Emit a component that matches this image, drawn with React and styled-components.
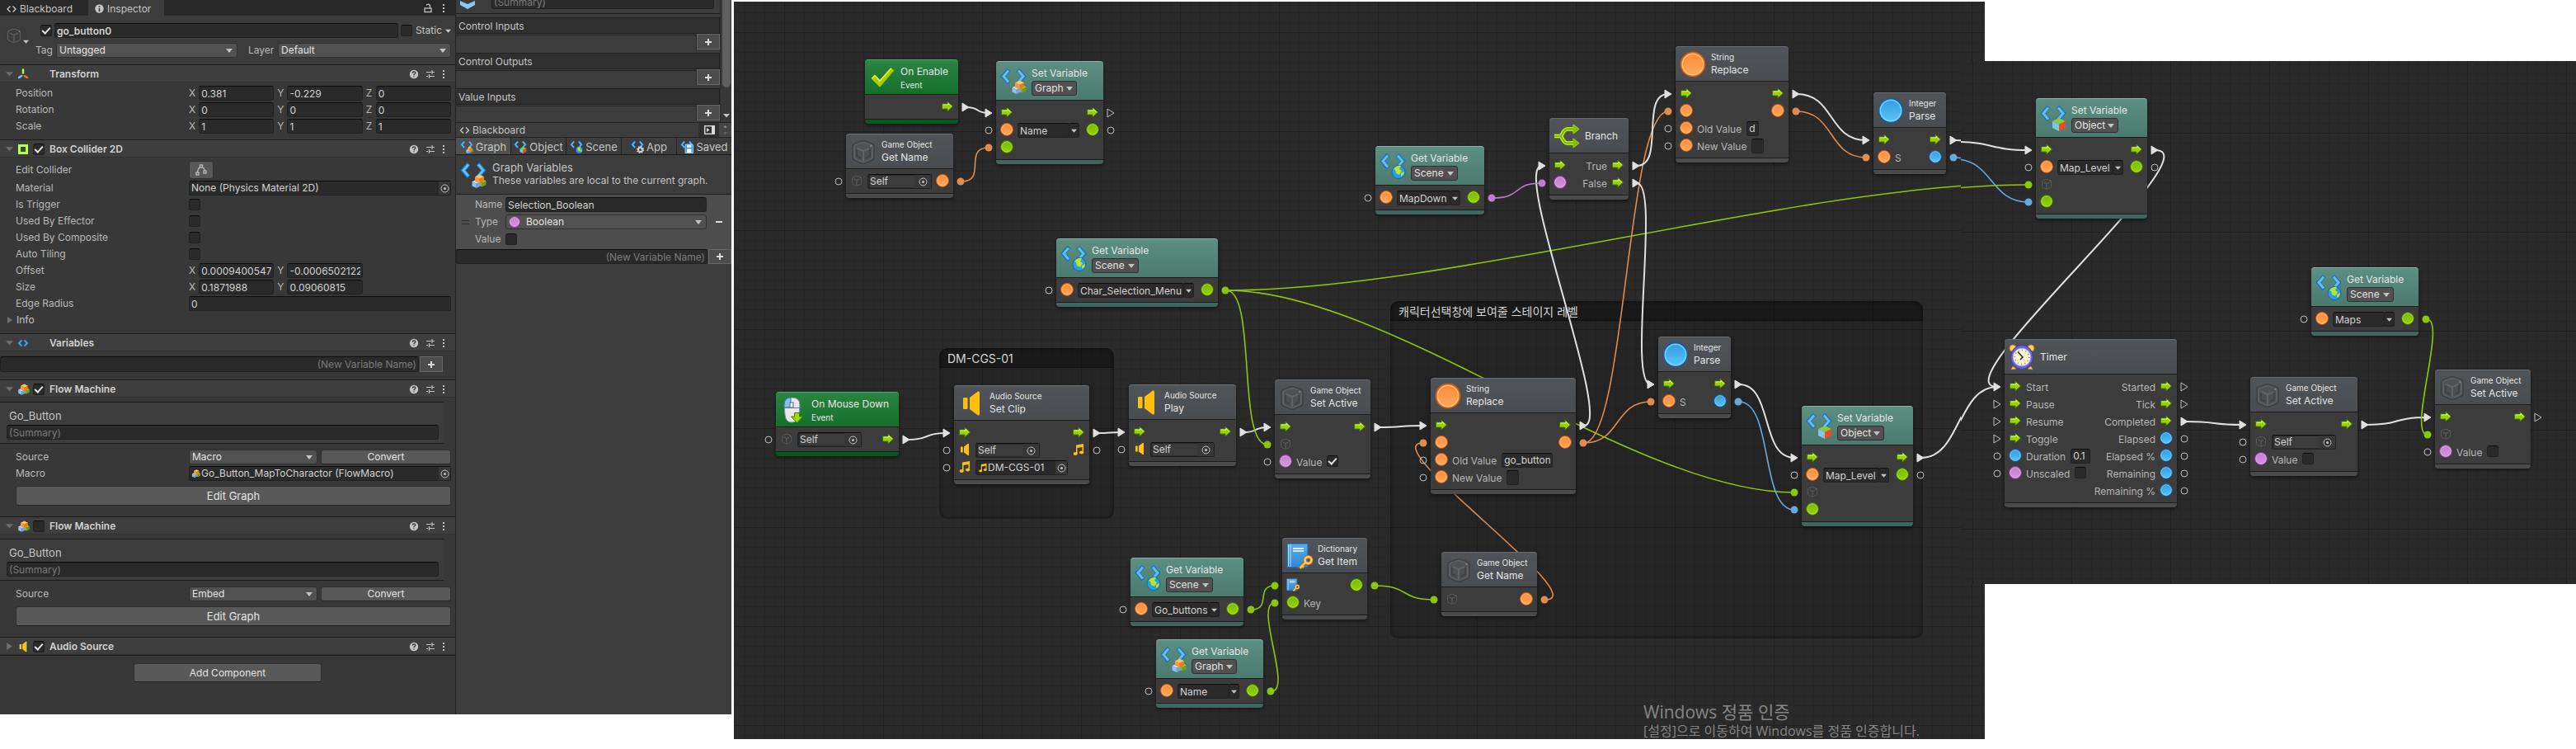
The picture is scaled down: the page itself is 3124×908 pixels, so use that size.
import React, { useId } from "react";
import styled, { createGlobalStyle, css } from "styled-components";

const GlobalStyle = createGlobalStyle`
  * { box-sizing: border-box; }
  body { margin: 0; background: #fff; color: #c4c4c4; font: 12px/16px Inter, "Noto Sans CJK KR", sans-serif; }
  button, input, select { font: inherit; color: inherit; margin: 0; }
  svg { display: block; flex: none; }
`;

const FLOW = "#e0e0e0";
const STR = "#e08c50";
const OBJ = "#8cc60c";
const BOOL = "#c07cce";
const NUM = "#64aade";

/* ---------- drawings ---------- */

const DefsHolder = styled.svg`
  position: absolute;
  width: 0;
  height: 0;
`;

const Gradients = () => (
  <DefsHolder aria-hidden="true">
    <defs>
      {[
        ["gOrange", "#ff8a34", "#ffa95e"],
        ["gGreen", "#78b800", "#9ad400"],
        ["gPink", "#c47fcf", "#d696df"],
        ["gBlue", "#2f9ade", "#5cc6fb"],
        ["gArrow", "#8fc400", "#a4dc00"],
        ["gBook", "#5aaee8", "#2f86d6"],
      ].map(([id, a, b]) => (
        <linearGradient key={id} id={id} x1="0" y1="0" x2="0" y2="1">
          <stop offset="0" stopColor={a} />
          <stop offset="1" stopColor={b} />
        </linearGradient>
      ))}
    </defs>
  </DefsHolder>
);

const Ball = ({ size, fill, rim, shine }) => (
  <svg width={size} height={size} viewBox="0 0 32 32">
    <circle cx="16" cy="16" r="14.5" fill={`url(#${fill})`} stroke={rim} strokeWidth={size > 20 ? 1.6 : 2.6} />
    <circle cx="16" cy="16" r="12.6" fill="none" stroke={shine} strokeWidth={size > 20 ? 1.2 : 1.8} opacity="0.75" />
  </svg>
);

const CodeMarks = () => (
  <g fill="none" strokeLinecap="butt" strokeLinejoin="miter">
    <path d="M10.5 2.5 L3.5 10.5 L10.5 18.5" stroke="#1c72b8" strokeWidth="5" />
    <path d="M21.5 2.5 L28.5 10.5 L21.5 18.5" stroke="#1c72b8" strokeWidth="5" />
    <path d="M10 3.5 L4 10.5 L10 17.5" stroke="#62bdf2" strokeWidth="3" />
    <path d="M22 3.5 L28 10.5 L22 17.5" stroke="#62bdf2" strokeWidth="3" />
  </g>
);

const CubeBit = ({ x, y, s, top, left, right }) => (
  <g transform={`translate(${x} ${y}) scale(${s})`}>
    <path d="M5 0 L10 2.5 L5 5 L0 2.5 Z" fill={top} />
    <path d="M0 2.5 L5 5 V10 L0 7.5 Z" fill={left} />
    <path d="M10 2.5 L5 5 V10 L10 7.5 Z" fill={right} />
  </g>
);

const Cubes = () => (
  <g>
    <CubeBit x={22} y={21} s={0.95} top="#b5d84a" left="#8ab52e" right="#6d9d20" />
    <CubeBit x={14.5} y={21.5} s={1.05} top="#c3e0fa" left="#8ec2f2" right="#6aa8e4" />
    <CubeBit x={18} y={15.5} s={1.1} top="#ffc266" left="#fb9a35" right="#e97e14" />
  </g>
);

const Globe = () => (
  <g>
    <circle cx="23" cy="23.5" r="8" fill="#2f9be4" stroke="#1767a8" strokeWidth="1" />
    <path d="M17 20 q4 -5 9 -4 l-2 4 3 2 -3 5 -4 -2 -1 -4 Z M26 25 l4 -2 -1 4 -3 2 Z" fill="#b4e82e" />
  </g>
);

const ObjCube = () => (
  <CubeBit x={15} y={16} s={1.6} top="#8fc83a" left="#7cc4f4" right="#ee4a1e" />
);

const GearBit = () => (
  <g>
    <circle cx="23" cy="23" r="5" fill="none" stroke="#d0d0d0" strokeWidth="4" />
    <circle cx="23" cy="23" r="7.8" fill="none" stroke="#d0d0d0" strokeWidth="3" strokeDasharray="3 3.12" />
  </g>
);

const DiskBit = () => (
  <g>
    <path d="M12 10 H29 L31 12 V31 H12 Z" fill="#2a9be6" stroke="#d9f0ff" strokeWidth="1.4" />
    <rect x="16" y="11" width="11" height="7" fill="#d9f0ff" />
    <rect x="16" y="21" width="11" height="9" fill="#fff" />
  </g>
);

const VarIcon = ({ size, badge: Badge }) => (
  <svg width={size} height={size} viewBox="0 0 32 32">
    <CodeMarks />
    {Badge && <Badge />}
  </svg>
);

const GhostCube = ({ size }) => (
  <svg width={size} height={size} viewBox="0 0 32 32" fill="none" strokeLinejoin="round">
    <path d="M3 9 Q3 7 6 6 L14 3 Q16 2.5 18 3 L26 6 Q29 7 29 9 V23 Q29 25 27 26 L18 30 Q16 30.5 14 30 L5 26 Q3 25 3 23 Z" stroke="#38393a" strokeWidth="1.4" opacity="0.7" />
    <path d="M5 10 Q5 8 8 7 L14 5 Q16 4.5 18 5 L24 7 Q27 8 27 10 V22 Q27 24 25 25 L18 28 Q16 28.6 14 28 L7 25 Q5 24 5 22 Z" stroke="#606264" strokeWidth="1.8" opacity="0.8" />
    <path d="M9 12 L16 15 L23 12 M16 15 V27" stroke="#6a6c6e" strokeWidth="2" opacity="0.7" />
    <path d="M8 13 V21 L13 24 M24 13 V21 L19 24" stroke="#38393a" strokeWidth="1.6" opacity="0.7" />
    <path d="M24.5 8.5 L26 9.5" stroke="#8a8c8e" strokeWidth="2" />
  </svg>
);

const FlowArrow = ({ size }) => (
  <svg width={size} height={size} viewBox="0 0 16 16">
    <path d="M1.5 5 H8 V2 L14.5 8 L8 14 V11 H1.5 Z" fill="url(#gArrow)" stroke="#3f7a00" strokeWidth="1" />
    <path d="M2.5 6 H9 V4.4 L12.8 8" fill="none" stroke="#eaf7a0" strokeWidth="1" />
  </svg>
);

const Speaker = ({ size }) => (
  <svg width={size} height={size} viewBox="0 0 32 32" fill="#fdc010">
    <rect x="6" y="9" width="5.5" height="14" rx="1" />
    <path d="M14 9 L24 1.5 Q26 1 26 3 V29 Q26 31 24 30.5 L14 23 Z" />
  </svg>
);

const Note = ({ size }) => (
  <svg width={size} height={size} viewBox="0 0 16 16" fill="#fdc010">
    <path d="M5 2.5 L14 1 V11 H12.5 V5 L6.5 6 V13 H5 Z" />
    <ellipse cx="4.2" cy="13" rx="2.6" ry="2" />
    <ellipse cx="11.6" cy="11.4" rx="2.6" ry="2" />
  </svg>
);

const Check = ({ size }) => (
  <svg width={size} height={size} viewBox="0 0 32 32">
    <path d="M2 17 L7 12 L13 18.5 L26.5 3.5 L30.5 7.5 L13 28 Z" fill="#a5cf00" stroke="#587f00" strokeWidth="1" />
    <path d="M3.5 17 L7 13.5 L13 20 L26.5 5" fill="none" stroke="#e2f56a" strokeWidth="1.2" />
  </svg>
);

const Mouse = ({ size }) => (
  <svg width={size} height={size} viewBox="0 0 32 32">
    <path d="M5 10 Q5 1 14 1 Q24 1 24 10 L23 22 Q22 31 14 31 Q7 31 6 22 Z" fill="#e6e8ea" stroke="#8b9094" strokeWidth="1" />
    <path d="M5 13 V10 Q5 1 13 1 V13 Z" fill="#8fbfe8" stroke="#2f6fae" strokeWidth="1" />
    <path d="M5 13.5 H24" stroke="#5d7f9e" strokeWidth="1" />
    <rect x="12" y="7" width="4" height="6" fill="#fff" stroke="#3f6a94" strokeWidth="1" />
    <path d="M17.5 19.5 H23.5 V24 H27.5 L20.5 31.5 L13.5 24 H17.5 Z" fill="#a2d800" stroke="#3f7a00" strokeWidth="1" />
  </svg>
);

const BookKey = ({ size }) => (
  <svg width={size} height={size} viewBox="0 0 32 32">
    <rect x="1" y="1" width="25" height="29" fill="url(#gBook)" stroke="#1a5fa0" strokeWidth="1" />
    <path d="M2.5 2 V29 M5 2 V29" stroke="#b5dcf7" strokeWidth="1" />
    <path d="M8 7 H21 M8 10 H21" stroke="#fff" strokeWidth="1.5" />
    <path d="M16 31 L24 23" stroke="#a86a10" strokeWidth="5" />
    <circle cx="26.5" cy="21" r="4" fill="none" stroke="#a86a10" strokeWidth="4.4" />
    <path d="M16.5 30.5 L24 23 M18 27 l3 3" stroke="#fdc860" strokeWidth="2.4" />
    <circle cx="26.5" cy="21" r="4" fill="none" stroke="#fdc860" strokeWidth="2.8" />
  </svg>
);

const BranchIcon = ({ size }) => (
  <svg width={size} height={size} viewBox="0 0 32 32" fill="none">
    {[["#3f7a00", 6.4], ["#d3f060", 4.4], ["#86bd00", 2.4]].map(([c, w]) => (
      <g key={c}>
        <path d="M1 16 H8 C11 16 11 7.5 17 7.5 H26 M8 16 C11 16 11 24.5 17 24.5 H26" stroke={c} strokeWidth={w} />
        <path d="M24 2 L31 7.5 L24 13 Z M24 19 L31 24.5 L24 30 Z" fill={c} stroke={c} strokeWidth={(w - 2) / 3} />
      </g>
    ))}
  </svg>
);

const Clock = ({ size }) => (
  <svg width={size} height={size} viewBox="0 0 32 32">
    <circle cx="5" cy="5" r="4" fill="#ffcf5c" stroke="#c08820" />
    <circle cx="27" cy="5" r="4" fill="#ffcf5c" stroke="#c08820" />
    <path d="M5 27 L3 31 L9 30 Z M27 27 L29 31 L23 30 Z" fill="#ffcf5c" stroke="#c08820" strokeWidth="0.6" />
    <ellipse cx="16" cy="16" rx="13.5" ry="14.5" fill="#6a62d8" stroke="#40389c" strokeWidth="1" />
    <circle cx="16" cy="16" r="10.8" fill="#fdf6d2" stroke="#a8a2f0" strokeWidth="1" />
    <circle cx="16" cy="16" r="8.6" fill="none" stroke="#555" strokeWidth="1.4" strokeDasharray="0.8 3.7" />
    <path d="M11 9.5 L17 16 L14 19" fill="none" stroke="#222" strokeWidth="1.5" />
  </svg>
);

const Target = () => (
  <svg width="11" height="11" viewBox="0 0 11 11">
    <circle cx="5.5" cy="5.5" r="4.5" fill="none" stroke="#c4c4c4" />
    <circle cx="5.5" cy="5.5" r="1.5" fill="#c4c4c4" />
  </svg>
);

const Caret = ({ dir = "down", color = "#c4c4c4", w = 8 }) => (
  <svg width={w} height={w} viewBox="0 0 8 8">
    <path d={dir === "down" ? "M0 2 H8 L4 6.5 Z" : dir === "up" ? "M0 6 H8 L4 1.5 Z" : "M1 0 L7 4 L1 8 Z"} fill={color} />
  </svg>
);

const CodeGlyph = ({ w = 12, color = "#c4c4c4", stroke = 1.4 }) => (
  <svg width={w} height="10" viewBox="0 0 12 10" fill="none" stroke={color} strokeWidth={stroke}>
    <path d="M4.5 1.5 L1 5 L4.5 8.5 M7.5 1.5 L11 5 L7.5 8.5" />
  </svg>
);

const Kebab = () => (
  <svg width="4" height="12" viewBox="0 0 4 12" fill="#c4c4c4">
    <rect x="1" y="1" width="2" height="2" /><rect x="1" y="5" width="2" height="2" /><rect x="1" y="9" width="2" height="2" />
  </svg>
);

const HelpGlyph = () => (
  <svg width="12" height="12" viewBox="0 0 12 12">
    <circle cx="6" cy="6" r="5.2" fill="#c4c4c4" />
    <path d="M4.2 4.8 Q4.2 3 6 3 Q7.8 3 7.8 4.6 Q7.8 5.6 6 6.4 V7.2 M6 8.2 V9.4" fill="none" stroke="#3c3c3c" strokeWidth="1.3" />
  </svg>
);

const PresetGlyph = () => (
  <svg width="12" height="12" viewBox="0 0 12 12" stroke="#c4c4c4" strokeWidth="1.2">
    <path d="M1 3.5 H7 M8 1 V6 M8 3.5 H11 M1 8.5 H3 M4.5 6 V11 M4.5 8.5 H11" />
  </svg>
);

const TransformGlyph = () => (
  <svg width="14" height="14" viewBox="0 0 14 14" strokeWidth="2.4" strokeLinecap="round">
    <path d="M7 1.5 V5.5" stroke="#b4ff50" />
    <path d="M5.2 9 L2 11" stroke="#78c8ff" />
    <path d="M8.8 9 L12 11" stroke="#ff6a3c" />
  </svg>
);

const ColliderGlyph = () => (
  <svg width="14" height="14" viewBox="0 0 14 14">
    <rect x="2.5" y="2.5" width="9" height="9" fill="#3a4a22" stroke="#b4ff50" strokeWidth="3" />
  </svg>
);

const MachineGlyph = ({ size = 16 }) => (
  <svg width={size} height={size} viewBox="13 14 20 19"><Cubes /></svg>
);

const ICONS = {
  arrow: (s) => <FlowArrow size={s} />,
  string: (s) => <Ball size={s} fill="gOrange" rim="#d95f0c" shine="#ffd0a0" />,
  object: (s) => <Ball size={s} fill="gGreen" rim="#3f7400" shine="#c8f060" />,
  bool: (s) => <Ball size={s} fill="gPink" rim="#8a3f98" shine="#eec0f4" />,
  int: (s) => <Ball size={s} fill="gBlue" rim="#125f9c" shine="#a0dcfc" />,
  cube: (s) => <GhostCube size={s} />,
  speaker: (s) => <Speaker size={s} />,
  note: (s) => <Note size={s} />,
  check: (s) => <Check size={s} />,
  mouse: (s) => <Mouse size={s} />,
  book: (s) => <BookKey size={s} />,
  branch: (s) => <BranchIcon size={s} />,
  clock: (s) => <Clock size={s} />,
  Graph: (s) => <VarIcon size={s} badge={Cubes} />,
  Scene: (s) => <VarIcon size={s} badge={Globe} />,
  Object: (s) => <VarIcon size={s} badge={ObjCube} />,
  App: (s) => <VarIcon size={s} badge={GearBit} />,
  Saved: (s) => <VarIcon size={s} badge={DiskBit} />,
};

/* ---------- shared controls ---------- */

const Page = styled.div`
  display: flex;
  align-items: flex-start;
`;

const inset = css`
  background: #2a2a2a;
  border: 1px solid #212121;
  border-top-color: #0d0d0d;
  border-radius: 3px;
`;

const TextInput = styled.input`
  ${inset}
  flex: ${(p) => (p.$w ? `0 0 ${p.$w}px` : "1 1 0")};
  width: ${(p) => (p.$w ? `${p.$w}px` : "100%")};
  min-width: 0;
  height: ${(p) => p.$h || 18}px;
  padding: 0 2px;
  color: #d2d2d2;
  outline: none;
  font-weight: ${(p) => (p.$bold ? 600 : 400)};
  text-align: ${(p) => (p.$right ? "right" : "left")};
  &::placeholder { color: #7b7b7b; opacity: 1; }
`;

const Tick = styled.input.attrs({ type: "checkbox" })`
  ${inset}
  appearance: none;
  flex: none;
  width: 14px;
  height: 14px;
  display: grid;
  place-items: center;
  &:checked::after {
    content: "";
    width: 4px;
    height: 8px;
    margin-top: -2px;
    border: solid #e4e4e4;
    border-width: 0 2px 2px 0;
    transform: rotate(42deg);
  }
`;

const PushButton = styled.button`
  display: flex;
  align-items: center;
  justify-content: center;
  flex: ${(p) => (p.$w ? `0 0 ${p.$w}px` : "1 1 0")};
  height: ${(p) => p.$h || 18}px;
  padding: 0;
  background: #585858;
  border: 1px solid #303030;
  border-bottom-color: #242424;
  border-radius: 3px;
  color: #e4e4e4;
  font-size: ${(p) => (p.$large ? 13 : 12)}px;
`;

const PlusButton = styled.button`
  flex: 0 0 28px;
  height: ${(p) => p.$h || 19}px;
  display: grid;
  place-items: center;
  padding: 0;
  background: #4c4c4c;
  border: 1px solid #666;
  color: #d8d8d8;
`;

const Plus = () => (
  <svg width="8" height="8" viewBox="0 0 8 8" stroke="#dcdcdc" strokeWidth="2"><path d="M4 0 V8 M0 4 H8" /></svg>
);

const SelectBox = styled.div`
  position: relative;
  display: flex;
  flex: ${(p) => (p.$w ? `0 0 ${p.$w}px` : "1 1 0")};
  width: ${(p) => (p.$w ? `${p.$w}px` : "auto")};
  min-width: 0;
  select {
    appearance: none;
    flex: 1;
    min-width: 0;
    height: 18px;
    padding: 0 ${(p) => (p.$dot ? "0 0 24px" : "3px")};
    background: #515151;
    border: 1px solid #303030;
    border-radius: 3px;
    color: #e4e4e4;
    outline: none;
  }
  &::after {
    content: "";
    position: absolute;
    right: ${(p) => (p.$tight ? 5 : 6)}px;
    top: 7px;
    border: solid transparent;
    border-width: 5px 4px 0;
    border-top-color: #c4c4c4;
    pointer-events: none;
  }
`;

const DotMark = styled.span`
  position: absolute;
  left: 4px;
  top: 2px;
`;

const Pick = ({ value, label, id, w, tight, dot }) => (
  <SelectBox $w={w} $tight={tight} $dot={dot}>
    <select id={id} aria-label={label} defaultValue={value}><option>{value}</option></select>
    {dot && <DotMark>{ICONS.bool(14)}</DotMark>}
  </SelectBox>
);

const ObjectBox = styled.div`
  ${inset}
  display: flex;
  align-items: center;
  flex: ${(p) => (p.$w ? `0 0 ${p.$w}px` : "1 1 0")};
  width: ${(p) => (p.$w ? `${p.$w}px` : "auto")};
  min-width: 0;
  height: 18px;
  padding-left: 2px;
  input {
    flex: 1;
    min-width: 0;
    height: 14px;
    padding: 0;
    border: 0;
    background: ${(p) => (p.$soft ? "#3c3c3c" : "transparent")};
    color: #d2d2d2;
    outline: none;
  }
  button {
    flex: 0 0 ${(p) => (p.$soft ? 20 : 14)}px;
    height: 16px;
    display: grid;
    place-items: center;
    padding: 0;
    border: 0;
    background: #373737;
  }
`;

const ObjectField = ({ value, icon, w, soft, id, label }) => (
  <ObjectBox $w={w} $soft={soft}>
    {icon}
    <input id={id} aria-label={label} defaultValue={value} />
    <button aria-label="Pick object"><Target /></button>
  </ObjectBox>
);

/* ---------- inspector ---------- */

const Inspector = styled.section`
  flex: 0 0 553px;
  min-width: 0;
  min-height: 866px;
  background: #383838;
  border-right: 1px solid #242424;
`;

const TabStrip = styled.div`
  display: flex;
  align-items: center;
  height: 19px;
  background: #282828;
`;

const Tab = styled.button`
  display: flex;
  align-items: center;
  gap: 4px;
  flex: 0 0 ${(p) => p.$w}px;
  height: 19px;
  padding: 2px 8px 0;
  border: 0;
  background: ${(p) => (p.$on ? "#3c3c3c" : "transparent")};
  color: #c4c4c4;
`;

const StripTools = styled.div`
  display: flex;
  align-items: center;
  gap: 12px;
  margin-left: auto;
  padding-right: 12px;
`;

const Identity = styled.div`
  display: grid;
  grid-template-columns: 37px 1fr;
  height: 78px;
  margin-bottom: -19px;
  padding: 9px 5px 0 6px;
  background: #3c3c3c;
`;

const Avatar = styled.div`
  display: flex;
  align-items: flex-end;
  height: 26px;
`;

const IdentityRows = styled.div`
  display: grid;
  align-content: start;
  gap: 6px;
`;

const Line = styled.div`
  display: flex;
  align-items: center;
  gap: ${(p) => p.$gap ?? 4}px;
`;

const Caption = styled.label`
  flex: ${(p) => (p.$w ? `0 0 ${p.$w}px` : "none")};
  min-width: 0;
  color: #b8b8b8;
`;

const SectionBar = styled.header`
  display: flex;
  align-items: center;
  position: relative;
  height: 22px;
  padding: 1px 12px 0 7px;
  background: #3e3e3e;
  border-top: 1px solid #1a1a1a;
  border-bottom: 1px solid #303030;
`;

const Slot = styled.span`
  display: flex;
  align-items: center;
  flex: 0 0 ${(p) => p.$w}px;
`;

const SectionTitle = styled.h2`
  flex: 1;
  margin: 0;
  font-size: 12px;
  font-weight: 600;
  color: #d2d2d2;
`;

const BarTools = styled.span`
  display: flex;
  align-items: center;
  gap: 8px;
`;

const SectionBody = styled.div`
  display: grid;
  gap: 2px;
  padding: 4px 5px 7px 19px;
`;

const PropRow = styled.div`
  display: grid;
  grid-template-columns: 210px 1fr;
  align-items: center;
  min-height: ${(p) => p.$h || 18}px;
`;

const Axes = styled.div`
  display: grid;
  grid-template-columns: repeat(3, 1fr);
  gap: 4px;
  label { display: flex; gap: 4px; align-items: center; min-width: 0; }
  span { flex: 0 0 8px; color: #b8b8b8; }
`;

const EditToggle = styled.button`
  width: 30px;
  height: 22px;
  display: grid;
  place-items: center;
  padding: 0;
  background: #585858;
  border: 1px solid #303030;
  border-radius: 3px;
`;

const Foldout = styled.button`
  display: flex;
  align-items: center;
  gap: 4px;
  height: 18px;
  margin-left: -11px;
  padding: 0;
  border: 0;
  background: none;
`;

const NewVariable = styled.div`
  display: flex;
  gap: 1px;
  padding: ${(p) => (p.$pad ? "6px 15px 9px 0" : "0")};
`;

const Summary = styled.div`
  margin: 5px 14px 0 0;
  padding: 8px 6px 4px 8px;
  border: solid #1a1a1a;
  border-width: 1px 0;
  background: #3c3c3c;
  display: grid;
  gap: 3px;
  h3 { margin: 0; padding-left: 3px; font-size: 13px; line-height: 16px; font-weight: 400; }
`;

const MachineBody = styled.div`
  display: grid;
  gap: 2px;
  padding: 7px 5px 13px 19px;
`;

const EditGraph = styled(PushButton)`
  margin-top: 4px;
  width: 100%;
`;

const AddRow = styled.div`
  display: flex;
  justify-content: center;
  padding-top: 9px;
  border-top: 1px solid #1a1a1a;
`;

const Section = ({ icon, title, toggle, on, closed, children }) => (
  <section>
    <SectionBar>
      <Slot $w={14}><Caret dir={closed ? "right" : "down"} color="#6e6e6e" w={9} /></Slot>
      <Slot $w={19}>{icon}</Slot>
      <Slot $w={20}>{toggle && <Tick defaultChecked={on} aria-label={`Enable ${title}`} />}</Slot>
      <SectionTitle>{title}</SectionTitle>
      <BarTools><HelpGlyph /><PresetGlyph /><Kebab /></BarTools>
    </SectionBar>
    {children}
  </section>
);

const Vector = ({ label, values }) => (
  <PropRow>
    <Caption as="span">{label}</Caption>
    <Axes>
      {values.map((v, i) => (
        <label key={i}><span>{"XYZ"[i]}</span><TextInput defaultValue={v} /></label>
      ))}
    </Axes>
  </PropRow>
);

const Prop = ({ label, render, h }) => {
  const id = useId();
  return (
    <PropRow $h={h}>
      <Caption htmlFor={id}>{label}</Caption>
      <Line>{render(id)}</Line>
    </PropRow>
  );
};

const FlowMachine = ({ on, source, macro }) => (
  <Section icon={<MachineGlyph />} title="Flow Machine" toggle on={on}>
    <Summary>
      <h3>Go_Button</h3>
      <TextInput placeholder="(Summary)" aria-label="Summary" />
    </Summary>
    <MachineBody>
      <Prop label="Source" render={(id) => (<><Pick id={id} value={source} /><PushButton>Convert</PushButton></>)} />
      {macro && (
        <Prop label="Macro" render={(id) => <ObjectField id={id} value={macro} icon={<MachineGlyph size={12} />} />} />
      )}
      <EditGraph $h={24} $large>Edit Graph</EditGraph>
    </MachineBody>
  </Section>
);

const InspectorPanel = () => (
  <Inspector>
    <TabStrip>
      <Tab $w={107}><CodeGlyph />Blackboard</Tab>
      <Tab $w={92} $on>
        <svg width="11" height="11" viewBox="0 0 11 11">
          <circle cx="5.5" cy="5.5" r="5.2" fill="#c4c4c4" />
          <path d="M5.5 2 V3.5 M5.5 4.8 V9" stroke="#3c3c3c" strokeWidth="1.6" />
        </svg>
        Inspector
      </Tab>
      <StripTools>
        <svg width="10" height="12" viewBox="0 0 10 12" fill="none" stroke="#c4c4c4" strokeWidth="1.3">
          <rect x="1" y="6" width="8" height="4.5" /><path d="M7.5 6 V3.5 Q7.5 1.2 5.2 1.2 Q3.6 1.2 3.2 2.6" />
        </svg>
        <Kebab />
      </StripTools>
    </TabStrip>
    <Identity>
      <Avatar><GhostCube size={22} /><Caret w={7} /></Avatar>
      <IdentityRows>
        <Line $gap={3}>
          <Slot $w={3} />
          <Tick defaultChecked aria-label="Active" />
          <TextInput $bold defaultValue="go_button0" aria-label="Name" />
          <Line as="label" $gap={4}><Tick /><span>Static</span><Caret w={7} /></Line>
        </Line>
        <Line $gap={3}>
          <Caption $w={22} htmlFor="tag">Tag</Caption>
          <Pick id="tag" value="Untagged" w={220} />
          <Slot $w={7} />
          <Caption $w={33} htmlFor="layer">Layer</Caption>
          <Pick id="layer" value="Default" />
        </Line>
      </IdentityRows>
    </Identity>

    <Section icon={<TransformGlyph />} title="Transform">
      <SectionBody>
        <Vector label="Position" values={["0.381", "-0.229", "0"]} />
        <Vector label="Rotation" values={["0", "0", "0"]} />
        <Vector label="Scale" values={["1", "1", "1"]} />
      </SectionBody>
    </Section>

    <Section icon={<ColliderGlyph />} title="Box Collider 2D" toggle on>
      <SectionBody>
        <Prop label="Edit Collider" h={22} render={(id) => (
          <EditToggle id={id} aria-label="Edit Collider">
            <svg width="14" height="14" viewBox="0 0 14 14" fill="none" stroke="#c4c4c4" strokeWidth="1.2">
              <path d="M2.5 10 Q3 5 6 3.5 M8 3.5 Q11 5 11.5 8" />
              <rect x="1" y="10" width="3" height="3" /><rect x="5.5" y="1" width="3" height="3" /><rect x="10" y="8" width="3" height="3" />
            </svg>
          </EditToggle>
        )} />
        <Prop label="Material" render={(id) => <ObjectField id={id} value="None (Physics Material 2D)" />} />
        {["Is Trigger", "Used By Effector", "Used By Composite", "Auto Tiling"].map((l) => (
          <Prop key={l} label={l} render={(id) => <Tick id={id} />} />
        ))}
        <Vector label="Offset" values={["0.0009400547", "-0.0006502122"]} />
        <Vector label="Size" values={["0.1871988", "0.09060815"]} />
        <Prop label="Edge Radius" render={(id) => <TextInput id={id} defaultValue="0" />} />
        <Foldout><Caret dir="right" color="#6e6e6e" />Info</Foldout>
      </SectionBody>
    </Section>

    <Section icon={<CodeGlyph w={14} color="#3ea0e6" stroke={2} />} title="Variables">
      <NewVariable $pad>
        <TextInput $h={19} $right placeholder="(New Variable Name)" aria-label="New variable name" />
        <PlusButton aria-label="Add variable"><Plus /></PlusButton>
      </NewVariable>
    </Section>

    <FlowMachine on source="Macro" macro="Go_Button_MapToCharactor (FlowMacro)" />
    <FlowMachine source="Embed" />

    <Section icon={<Speaker size={14} />} title="Audio Source" toggle on closed />
    <AddRow><PushButton $w={228} $h={23}>Add Component</PushButton></AddRow>
  </Inspector>
);

/* ---------- graph panel ---------- */

const GraphPanel = styled.section`
  flex: 0 0 334px;
  min-width: 0;
  min-height: 866px;
  margin-right: 3px;
  background: #3c3c3c;
`;

const PortsArea = styled.div`
  display: grid;
  grid-template-columns: 320px 1fr;
  height: 148px;
  overflow: hidden;
`;

const GraphHead = styled.div`
  display: flex;
  align-items: flex-end;
  gap: 20px;
  height: 17px;
  padding: 0 7px 5px 5px;
  border-bottom: 1px solid #1a1a1a;
  overflow: hidden;
`;

const PortList = styled.div`
  display: flex;
  flex-wrap: wrap;
  justify-content: flex-end;
  height: 39px;
  margin-top: 4px;
  h3 {
    flex: 0 0 100%;
    height: 20px;
    margin: 0;
    padding: 0 3px;
    font-size: 12px;
    font-weight: 400;
    line-height: 20px;
    background: #303030;
    border: solid #222;
    border-width: 1px 1px 1px 0;
  }
  div { flex: 1; height: 18px; border: solid #252525; border-width: 1px 1px 0 0; margin-top: 1px; }
`;

const ScrollTrack = styled.div`
  display: flex;
  flex-direction: column;
  align-items: center;
  justify-content: space-between;
  padding: 0 1px 4px;
  border-left: 1px solid #2c2c2c;
  background: #383838;
`;

const ScrollThumb = styled.div`
  width: 10px;
  height: 106px;
  border-radius: 0 0 5px 5px;
  background: #5f5f5f;
`;

const BoardBar = styled.div`
  display: flex;
  align-items: center;
  gap: 3px;
  height: 19px;
  padding-left: 4px;
  border: solid #222;
  border-width: 1px 0;
`;

const BarEnd = styled.div`
  display: flex;
  align-items: center;
  gap: 5px;
  margin-left: auto;
  height: 17px;
  padding-left: 7px;
  background: #303030;
`;

const Steppers = styled.div`
  display: grid;
  width: 15px;
  height: 17px;
  place-items: center;
  background: #454545;
`;

const ScopeTabs = styled.div`
  display: grid;
  grid-template-columns: repeat(5, 1fr);
  gap: 1px;
  height: 21px;
  background: #222;
  border-bottom: 1px solid #1a1a1a;
`;

const ScopeTab = styled.button`
  display: flex;
  align-items: center;
  justify-content: center;
  gap: 3px;
  min-width: 0;
  padding: 2px 0 0;
  border: 0;
  font-size: 13px;
  background: ${(p) => (p.$on ? "#505050" : "#3c3c3c")};
`;

const ScopeInfo = styled.div`
  display: flex;
  align-items: center;
  gap: 7px;
  height: 48px;
  padding-left: 5px;
  border-bottom: 1px solid #222;
  h3 { margin: 0; font-size: 13px; line-height: 15px; font-weight: 400; }
  p { margin: 0; line-height: 16px; white-space: nowrap; }
`;

const VariableItem = styled.div`
  display: grid;
  grid-template-columns: 10px 44px 244px 1fr;
  grid-auto-rows: 18px;
  gap: 3px 0;
  align-items: center;
  height: 66px;
  padding: 3px 0 0 6px;
  background: #4d4d4d;
  label { padding-left: 7px; color: #b8b8b8; }
  > svg { justify-self: center; }
`;

const SidePanel = () => (
  <GraphPanel>
    <PortsArea>
      <div>
        <GraphHead>
          <svg width="18" height="14" viewBox="0 0 18 14"><path d="M0 4 L9 8 L18 4 V9 L9 14 L0 9 Z" fill="#8ec6f4" /></svg>
          <TextInput placeholder="(Summary)" aria-label="Graph summary" />
        </GraphHead>
        {["Control Inputs", "Control Outputs", "Value Inputs"].map((t) => (
          <PortList key={t}>
            <h3>{t}</h3>
            <div />
            <PlusButton aria-label={`Add to ${t}`}><Plus /></PlusButton>
          </PortList>
        ))}
      </div>
      <ScrollTrack><ScrollThumb /><Caret /></ScrollTrack>
    </PortsArea>
    <BoardBar>
      <CodeGlyph w={13} />Blackboard
      <BarEnd>
        <svg width="13" height="11" viewBox="0 0 13 11">
          <rect x="0.7" y="0.7" width="11.6" height="9.6" fill="none" stroke="#d8d8d8" strokeWidth="1.4" />
          <path d="M9 1 H12 V10 H9 Z M3 3 L6.5 5.5 L3 8 Z" fill="#d8d8d8" />
        </svg>
        <Steppers><Caret dir="up" w={5} color="#888" /><Caret w={5} color="#666" /></Steppers>
      </BarEnd>
    </BoardBar>
    <ScopeTabs>
      {["Graph", "Object", "Scene", "App", "Saved"].map((t, i) => (
        <ScopeTab key={t} $on={i === 0}>{ICONS[t](16)}{t}</ScopeTab>
      ))}
    </ScopeTabs>
    <ScopeInfo>
      {ICONS.Graph(32)}
      <div>
        <h3>Graph Variables</h3>
        <p>These variables are local to the current graph.</p>
      </div>
    </ScopeInfo>
    <VariableItem>
      <span /><label htmlFor="v-name">Name</label><TextInput id="v-name" defaultValue="Selection_Boolean" /><span />
      <svg width="9" height="5" viewBox="0 0 9 5" stroke="#2c2c2c"><path d="M0 0.5 H9 M0 4.5 H9" /></svg>
      <label htmlFor="v-type">Type</label><Pick id="v-type" value="Boolean" dot />
      <svg width="8" height="2" viewBox="0 0 8 2"><path d="M0 1 H8" stroke="#dcdcdc" strokeWidth="2" /></svg>
      <span /><label htmlFor="v-value">Value</label><Tick id="v-value" /><span />
    </VariableItem>
    <NewVariable>
      <TextInput $right placeholder="(New Variable Name)" aria-label="New graph variable" />
      <PlusButton $h={18} aria-label="Add graph variable"><Plus /></PlusButton>
    </NewVariable>
  </GraphPanel>
);

/* ---------- node canvas ---------- */

const Board = styled.main`
  flex: 1;
  display: flex;
  align-items: flex-start;
  min-width: 0;
`;

const Sheet = styled.section`
  position: relative;
  flex: ${(p) => p.$grow} 0 0;
  height: ${(p) => p.$h}px;
  margin: ${(p) => p.$margin};
  overflow: hidden;
  background-color: #2a2a2a;
  background-image: linear-gradient(to right, #202020 1px, transparent 1px),
    linear-gradient(to bottom, #202020 1px, transparent 1px),
    linear-gradient(to right, #262626 1px, transparent 1px),
    linear-gradient(to bottom, #262626 1px, transparent 1px);
  background-size: 120px 120px, 120px 120px, 12px 12px, 12px 12px;
  background-position: ${(p) => `${p.$gx}px 0, 0 ${p.$gy}px, ${p.$gx % 12}px 0, 0 ${p.$gy % 12}px`};
`;

const WireLayer = styled.svg`
  position: absolute;
  inset: 0;
  width: 100%;
  height: 100%;
  fill: none;
`;

const GroupFrame = styled.div`
  position: absolute;
  left: ${(p) => p.$x}px;
  top: ${(p) => p.$y}px;
  width: ${(p) => p.$w}px;
  height: ${(p) => p.$h}px;
  border-radius: 10px;
  background: rgba(0, 0, 0, 0.12);
  box-shadow: inset 0 0 5px rgba(0, 0, 0, 0.5);
  overflow: hidden;
  h2 {
    margin: 0;
    padding-left: 10px;
    height: 24px;
    line-height: 26px;
    font-size: 14px;
    font-weight: 400;
    color: #d4d4d4;
    background: rgba(0, 0, 0, 0.3);
    border-bottom: 1px solid rgba(0, 0, 0, 0.35);
  }
`;

const TONES = {
  gray: ["#505357", "#494c50", "#6a6d70", "#4a4b4d"],
  teal: ["#5b8f81", "#4b7a6e", "#86b3a6", "#3e655e"],
  green: ["#2b8341", "#146f2d", "#5aa56c", "#04591f"],
};

const NodeCard = styled.article`
  position: absolute;
  left: ${(p) => p.$x}px;
  top: ${(p) => p.$y}px;
  width: ${(p) => p.$w}px;
  border-radius: 4px;
  background: ${(p) => TONES[p.$tone][3]};
  box-shadow: 0 2px 4px rgba(0, 0, 0, 0.5);
  padding-bottom: 5px;
`;

const NodeHead = styled.header`
  display: flex;
  align-items: center;
  gap: 6px;
  height: ${(p) => (p.$tall ? 47 : 42)}px;
  padding: 0 5px;
  border-top: 1px solid ${(p) => TONES[p.$tone][2]};
  border-radius: 4px 4px 0 0;
  background: linear-gradient(${(p) => TONES[p.$tone][0]}, ${(p) => TONES[p.$tone][1]});
`;

const NodeText = styled.div`
  display: grid;
  justify-items: start;
  white-space: nowrap;
  color: #e6e6e6;
  h3 { margin: 0; font-size: 12px; line-height: 18px; font-weight: 400; }
  p { margin: 0; font-size: 10px; line-height: 14px; }
`;

const NodeBody = styled.div`
  display: grid;
  gap: 3px;
  padding: 6px 5px 5px;
  border: solid #1c1c1c;
  border-width: 1px 0;
  background: #3c3c3c;
`;

const PortRow = styled.div`
  position: relative;
  display: flex;
  align-items: flex-start;
  justify-content: space-between;
  height: 18px;
`;

const PortSide = styled.div`
  display: flex;
  align-items: flex-start;
  gap: 5px;
  span, label { line-height: 20px; color: #b6b6b6; white-space: nowrap; }
  label { display: flex; gap: 6px; align-items: flex-start; }
  ${Tick} { margin-top: 1px; }
`;

const Plug = styled.svg`
  position: absolute;
  top: 3px;
  ${(p) => p.$side}: -19px;
`;

const ComboBox = styled.div`
  display: flex;
  flex: 0 0 ${(p) => p.$w}px;
  width: ${(p) => p.$w}px;
  min-width: 0;
  button {
    ${inset}
    flex: 0 0 13px;
    height: 18px;
    margin-left: -1px;
    display: grid;
    place-items: center;
    padding: 0;
  }
`;

const Connector = ({ side, flow, color }) => (
  <Plug $side={side} width="10" height="12" viewBox="0 0 10 12">
    {flow
      ? <path d="M1 1 L9 6 L1 11 Z" fill={color || "none"} stroke={color || "#bdbdbd"} />
      : <circle cx="5" cy="6" r={color ? 4.5 : 4} fill={color || "none"} stroke={color ? "none" : "#bdbdbd"} />}
  </Plug>
);

const Control = ({ c }) => {
  if (c.combo) {
    return (
      <ComboBox $w={c.w || 75}>
        <TextInput defaultValue={c.combo} aria-label="Variable" />
        <button aria-label="Choose variable"><Caret w={7} /></button>
      </ComboBox>
    );
  }
  if (c.obj) return <ObjectField soft={!c.icon} w={c.w || 78} value={c.obj} label="Target" icon={c.icon && ICONS[c.icon](12)} />;
  if (c.check !== undefined) return <label><span>{c.label}</span><Tick defaultChecked={c.check} /></label>;
  if (c.text !== undefined) return <label><span>{c.label}</span><TextInput $w={c.w} defaultValue={c.text} /></label>;
  return <span>{c.label}</span>;
};

const Node = ({ n, ox, oy }) => (
  <NodeCard $x={n.x - ox} $y={n.y - oy} $w={n.w} $tone={n.tone || "gray"}>
    <NodeHead $tone={n.tone || "gray"} $tall={!!n.scope}>
      {ICONS[n.icon || n.scope](32)}
      <NodeText>
        {n.over && <p>{n.over}</p>}
        <h3>{n.title}</h3>
        {n.under && <p>{n.under}</p>}
        {n.scope && <Pick value={n.scope} label="Scope" w={n.scope === "Graph" ? 55 : 57} tight />}
      </NodeText>
    </NodeHead>
    <NodeBody>
      {n.rows.map(([i, o, c, outLabel], k) => (
        <PortRow key={k}>
          <PortSide>
            {i && <Connector side="left" flow={i[0] === "arrow"} color={i[1]} />}
            {i && ICONS[i[0]](16)}
            {c && <Control c={c} />}
          </PortSide>
          <PortSide>
            {outLabel && <span>{outLabel}</span>}
            {o && ICONS[o[0]](16)}
            {o && <Connector side="right" flow={o[0] === "arrow"} color={o[1]} />}
          </PortSide>
        </PortRow>
      ))}
    </NodeBody>
  </NodeCard>
);

const getVar = (x, y, w, scope, name, fieldW, outColor) => ({
  x, y, w, tone: "teal", scope, title: "Get Variable",
  rows: [[["string"], ["object", outColor], { combo: name, w: fieldW }]],
});

const setObject = (x, y) => ({
  x, y, w: 135, tone: "teal", scope: "Object", title: "Set Variable",
  rows: [
    [["arrow", FLOW], ["arrow", FLOW]],
    [["string"], ["object"], { combo: "Map_Level", w: 80 }],
    [["cube", OBJ]],
    [["object", NUM]],
  ],
});

const parse = (x, y) => ({
  x, y, w: 88, icon: "int", over: "Integer", title: "Parse",
  rows: [[["arrow", FLOW], ["arrow", FLOW]], [["string", STR], ["int", NUM], { label: "S" }]],
});

const replace = (x, y, w, oldValue, fieldW) => ({
  x, y, w, icon: "string", over: "String", title: "Replace",
  rows: [
    [["arrow", FLOW], ["arrow", FLOW]],
    [["string", STR], ["string", STR]],
    [["string"], null, { label: "Old Value", text: oldValue, w: fieldW }],
    [["string"], null, { label: "New Value", text: "", w: 15 }],
  ],
});

const MAIN_NODES = [
  { x: 1049, y: 72, w: 113, tone: "green", icon: "check", title: "On Enable", under: "Event", rows: [[null, ["arrow", FLOW]]] },
  {
    x: 1208, y: 74, w: 130, tone: "teal", scope: "Graph", title: "Set Variable",
    rows: [[["arrow", FLOW], ["arrow"]], [["string"], ["object"], { combo: "Name" }], [["object", STR]]],
  },
  { x: 1026, y: 162, w: 130, icon: "cube", over: "Game Object", title: "Get Name", rows: [[["cube"], ["string", STR], { obj: "Self" }]] },
  getVar(1281, 289, 196, "Scene", "Char_Selection_Menu", 141, OBJ),
  { x: 941, y: 475, w: 149, tone: "green", icon: "mouse", title: "On Mouse Down", under: "Event", rows: [[["cube"], ["arrow", FLOW], { obj: "Self" }]] },
  {
    x: 1157, y: 467, w: 164, icon: "speaker", over: "Audio Source", title: "Set Clip",
    rows: [
      [["arrow", FLOW], ["arrow", FLOW]],
      [["speaker"], ["note"], { obj: "Self" }],
      [["note"], null, { obj: "DM-CGS-01", icon: "note", w: 112 }],
    ],
  },
  {
    x: 1369, y: 466, w: 130, icon: "speaker", over: "Audio Source", title: "Play",
    rows: [[["arrow", FLOW], ["arrow", FLOW]], [["speaker"], null, { obj: "Self" }]],
  },
  {
    x: 1546, y: 460, w: 116, icon: "cube", over: "Game Object", title: "Set Active",
    rows: [[["arrow", FLOW], ["arrow", FLOW]], [["cube", OBJ]], [["bool"], null, { label: "Value", check: true }]],
  },
  replace(1735, 458, 176, "go_button", 62),
  { x: 1748, y: 669, w: 116, icon: "cube", over: "Game Object", title: "Get Name", rows: [[["cube", OBJ], ["string", STR]]] },
  {
    x: 1555, y: 652, w: 103, icon: "book", over: "Dictionary", title: "Get Item",
    rows: [[["book", OBJ], ["object", OBJ]], [["object", OBJ], null, { label: "Key" }]],
  },
  getVar(1371, 676, 137, "Scene", "Go_buttons", 82, OBJ),
  getVar(1402, 775, 130, "Graph", "Name", 75, OBJ),
  getVar(1668, 177, 132, "Scene", "MapDown", 77, BOOL),
  {
    x: 1879, y: 143, w: 96, icon: "branch", title: "Branch",
    rows: [[["arrow", FLOW], ["arrow", FLOW], null, "True"], [["bool", BOOL], ["arrow", FLOW], null, "False"]],
  },
  replace(2032, 56, 137, "d", 15),
  parse(2272, 112),
  parse(2011, 408),
  setObject(2185, 492),
];

const SIDE_NODES = [
  setObject(2469, 119),
  {
    x: 2431, y: 411, w: 209, icon: "clock", title: "Timer",
    rows: [
      [["arrow", FLOW], ["arrow"], { label: "Start" }, "Started"],
      [["arrow"], ["arrow"], { label: "Pause" }, "Tick"],
      [["arrow"], ["arrow", FLOW], { label: "Resume" }, "Completed"],
      [["arrow"], ["int"], { label: "Toggle" }, "Elapsed"],
      [["int"], ["int"], { label: "Duration", text: "0.1", w: 24 }, "Elapsed %"],
      [["bool"], ["int"], { label: "Unscaled", check: false }, "Remaining"],
      [null, ["int"], null, "Remaining %"],
    ],
  },
  getVar(2803, 324, 130, "Scene", "Maps", 75, OBJ),
  {
    x: 2729, y: 457, w: 130, icon: "cube", over: "Game Object", title: "Set Active",
    rows: [[["arrow", FLOW], ["arrow", FLOW]], [["cube"], null, { obj: "Self" }], [["bool"], null, { label: "Value", check: false }]],
  },
  {
    x: 2953, y: 448, w: 116, icon: "cube", over: "Game Object", title: "Set Active",
    rows: [[["arrow", FLOW], ["arrow"]], [["cube", OBJ]], [["bool"], null, { label: "Value", check: false }]],
  },
];

const MAIN_WIRES = [
  [FLOW, 1172, 130, 1199, 137],
  [STR, 1166, 220, 1199, 179],
  [FLOW, 1100, 533, 1148, 525],
  [FLOW, 1331, 525, 1360, 524],
  [FLOW, 1509, 524, 1537, 518],
  [FLOW, 1672, 518, 1726, 516],
  [OBJ, 1487, 352, 1537, 539],
  [OBJ, 1487, 352, 2176, 597],
  [OBJ, 1487, 352, 2460, 222],
  [FLOW, 1921, 516, 1870, 201],
  [STR, 1921, 537, 2023, 135],
  [STR, 1921, 537, 2002, 487],
  [STR, 1874, 727, 1726, 537],
  [OBJ, 1668, 710, 1739, 727],
  [OBJ, 1518, 739, 1546, 710],
  [OBJ, 1542, 838, 1546, 731],
  [BOOL, 1810, 240, 1870, 222],
  [FLOW, 1985, 201, 2023, 114],
  [FLOW, 1985, 222, 2002, 466],
  [FLOW, 2179, 114, 2263, 170],
  [STR, 2179, 135, 2263, 191],
  [FLOW, 2370, 170, 2460, 180],
  [NUM, 2370, 191, 2460, 243],
  [FLOW, 2109, 466, 2176, 555],
  [NUM, 2109, 487, 2176, 618],
  [FLOW, 2330, 555, 2422, 466],
];

const SIDE_WIRES = [
  [FLOW, 2370, 172, 2460, 182],
  [NUM, 2370, 193, 2460, 245],
  [OBJ, 1487, 354, 2460, 224],
  [FLOW, 2330, 557, 2422, 469],
  [FLOW, 2614, 182, 2422, 469],
  [FLOW, 2650, 511, 2720, 515],
  [FLOW, 2869, 515, 2944, 506],
  [OBJ, 2943, 387, 2944, 527],
];

const wirePath = ([, x1, y1, x2, y2]) => {
  const reach = Math.min(25 + 0.25 * Math.abs(x2 - x1), 0.6 * Math.hypot(x2 - x1, y2 - y1));
  return `M${x1} ${y1} C${x1 + reach} ${y1} ${x2 - reach} ${y2} ${x2} ${y2}`;
};

const Wires = ({ list, ox, oy }) => (
  <WireLayer>
    <g transform={`translate(${-ox} ${-oy})`}>
      {list.map((w, i) => (
        <path key={i} d={wirePath(w)} stroke={w[0]} strokeWidth={w[0] === FLOW ? 2 : 1.6} />
      ))}
    </g>
  </WireLayer>
);

const Watermark = styled.aside`
  position: absolute;
  left: 1103px;
  bottom: 0;
  color: #858585;
  white-space: nowrap;
  font-family: "Open Sans", "Noto Sans CJK KR", sans-serif;
  p { margin: 0; font-size: 21px; line-height: 26px; }
  p + p { font-size: 16px; line-height: 20px; }
`;

export default function App() {
  return (
    <Page>
      <GlobalStyle />
      <Gradients />
      <InspectorPanel />
      <SidePanel />
      <Board>
        <Sheet $grow={1517} $h={894} $margin="2px -29px 0 0" $gx={61} $gy={37}>
          <GroupFrame $x={249} $y={420} $w={212} $h={207}><h2>DM-CGS-01</h2></GroupFrame>
          <GroupFrame $x={796} $y={363} $w={646} $h={409}><h2>캐릭터선택창에 보여줄 스테이지 레벨</h2></GroupFrame>
          <Wires list={MAIN_WIRES} ox={890} oy={2} />
          {MAIN_NODES.map((n, i) => <Node key={i} n={n} ox={890} oy={2} />)}
          <Watermark>
            <p>Windows 정품 인증</p>
            <p>[설정]으로 이동하여 Windows를 정품 인증합니다.</p>
          </Watermark>
        </Sheet>
        <Sheet $grow={746} $h={634} $margin="74px 0 0 0" $gx={14} $gy={87}>
          <Wires list={SIDE_WIRES} ox={2378} oy={74} />
          {SIDE_NODES.map((n, i) => <Node key={i} n={n} ox={2378} oy={74} />)}
        </Sheet>
      </Board>
    </Page>
  );
}
